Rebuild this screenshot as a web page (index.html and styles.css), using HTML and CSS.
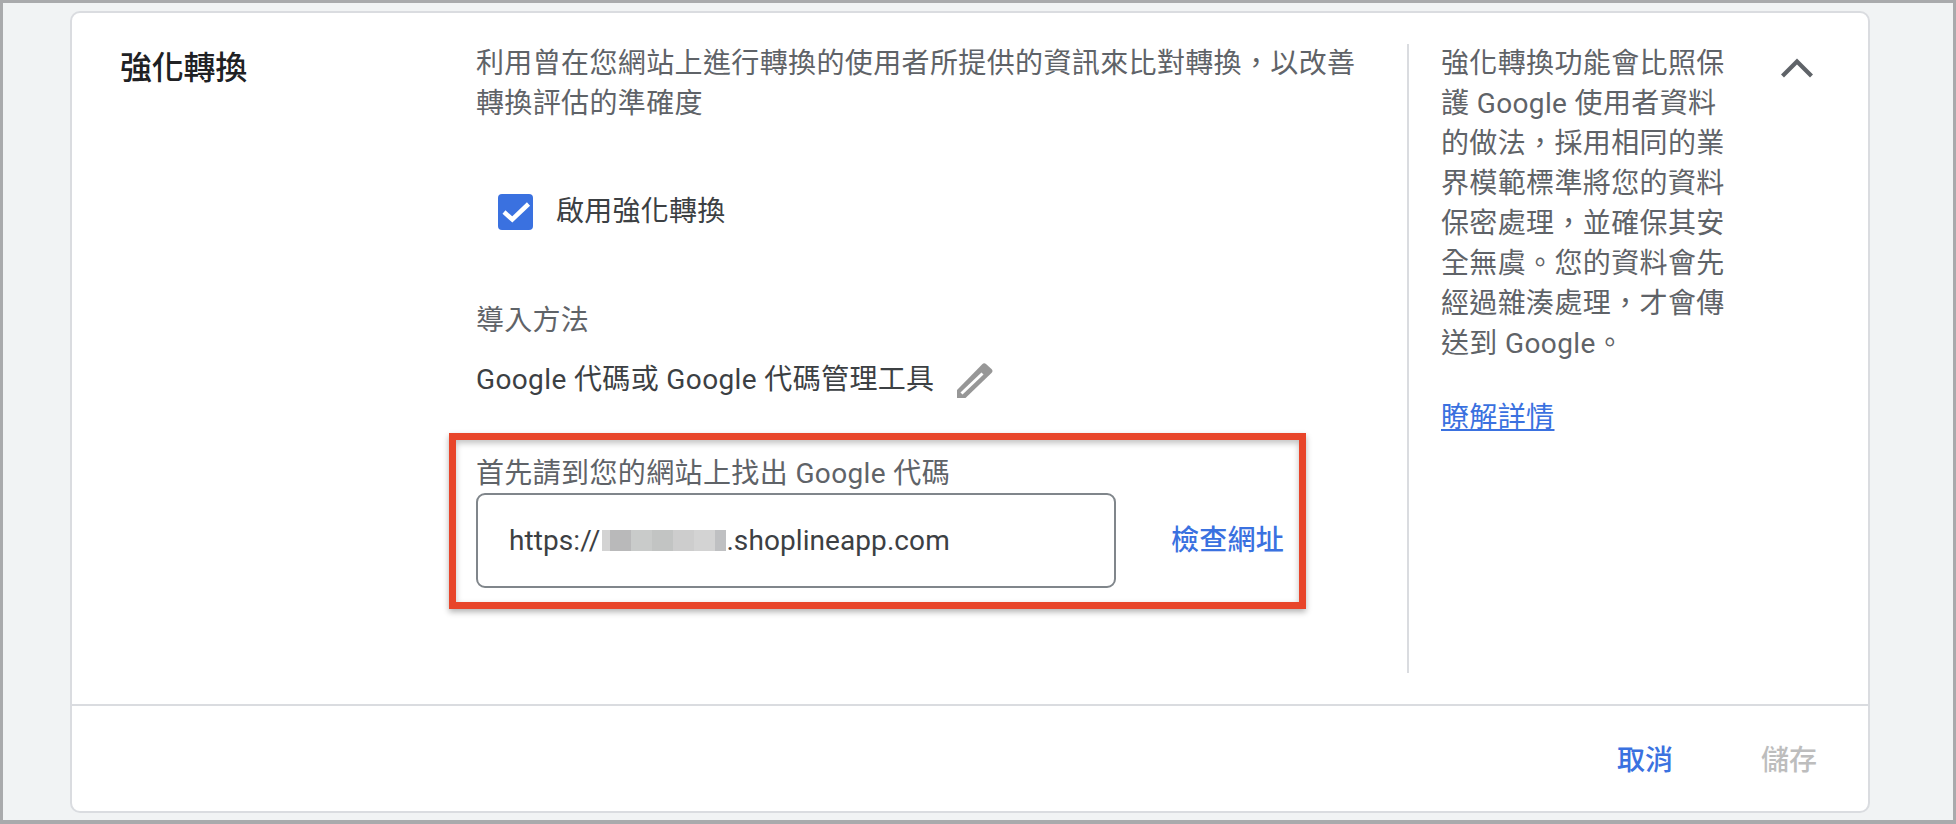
FILE: index.html
```html
<!DOCTYPE html>
<html lang="zh-Hant">
<head>
    <meta charset="UTF-8">
    <meta name="viewport" content="width=device-width, initial-scale=1.0">
    <title>強化轉換</title>
    <link rel="stylesheet" href="styles.css">
</head>
<body>
    <div class="frame">
        <div class="card">
            <div class="card-body">
                <h2 class="title">強化轉換</h2>
                <div class="main">
                    <p class="desc">利用曾在您網站上進行轉換的使用者所提供的資訊來比對轉換&#65292;以改善轉換評估的準確度</p>
                    <div class="check-row">
                        <span class="checkbox">
                            <svg width="35" height="36" viewBox="0 0 35 36"><path d="M6 18l8.300 7.500L30.500 10" fill="none" stroke="#fff" stroke-width="4.500"/></svg>
                        </span>
                        <span class="check-label">啟用強化轉換</span>
                    </div>
                    <p class="field-name">導入方法</p>
                    <div class="method-row">
                        <span>Google 代碼或 Google 代碼管理工具</span>
                        <svg class="pencil" width="36" height="36" viewBox="0 0 36 36">
                            <path d="M0 36V28L25 2.500Q27 0.500 29 2L34.500 7Q36.500 9 34.500 11L8.500 36Z" fill="#979797"/>
                            <path d="M4.500 31.500L25.500 11.500" fill="none" stroke="#fff" stroke-width="3"/>
                        </svg>
                    </div>
                    <div class="highlight">
                        <p class="url-label">首先請到您的網站上找出 Google 代碼</p>
                        <div class="url-row">
                            <div class="url-input">
                                <span>https://</span>
                                <span class="blur">
                                    <i class="b1"></i><i class="b2"></i><i class="b3"></i><i class="b4"></i><i class="b5"></i><i class="b6"></i><i class="b7"></i>
                                </span>
                                <span>.shoplineapp.com</span>
                            </div>
                            <a class="check-link" href="#">檢查網址</a>
                        </div>
                    </div>
                </div>
                <div class="side">
                    <p class="side-text">強化轉換功能會比照保護 Google 使用者資料的做法&#65292;採用相同的業界模範標準將您的資料保密處理&#65292;並確保其安全無虞。您的資料會先經過雜湊處理&#65292;才會傳送到 Google。</p>
                    <a class="learn-more" href="#">瞭解詳情</a>
                </div>
                <svg class="chevron" width="32" height="20" viewBox="0 0 32 20"><path d="M1.500 18L16 3.500 30.500 18" fill="none" stroke="#5f6368" stroke-width="4.200"/></svg>
            </div>
            <div class="card-footer">
                <a class="btn-cancel" href="#">取消</a>
                <span class="btn-save">儲存</span>
            </div>
        </div>
    </div>
</body>
</html>
```

FILE: styles.css
```css
* {
    box-sizing: border-box;
}
html, body {
    height: 824px;
    overflow: hidden;
}
body {
    margin: 0;
    padding: 3px 3px 4px 3px;
    background-color: #a9aaac;
    font-family: Roboto, "Noto Sans CJK TC", sans-serif;
    font-size: 28px;
    line-height: 40px;
    letter-spacing: 0.37px;
    color: #5f6368;
}
p, h2 {
    margin: 0;
}
a {
    color: #3a71e0;
    text-decoration: none;
}
.frame {
    height: 817px;
    padding: 8px 83px 7px 67px;
    background-color: #f1f3f4;
}
.card {
    height: 802px;
    display: flex;
    flex-direction: column;
    background-color: #fff;
    border: 2px solid #dadce0;
    border-radius: 10px;
}
.card-body {
    height: 693px;
    display: flex;
    padding: 31px 0 0 48px;
    border-bottom: 2px solid #dadce0;
}
.title {
    width: 356px;
    margin-top: 4px;
    font-size: 32px;
    font-weight: 500;
    letter-spacing: -0.25px;
    color: #202124;
}
.main {
    width: 931px;
}
.desc {
    width: 890px;
}
.check-row {
    display: flex;
    align-items: center;
    gap: 23px;
    margin: 68px 0 0 22px;
    letter-spacing: 0.25px;
    color: #3c4043;
}
.checkbox {
    width: 35px;
    height: 36px;
    display: block;
    background-color: #3a71e0;
    border-radius: 4px;
}
.checkbox svg {
    display: block;
}
.field-name {
    margin-top: 69px;
    letter-spacing: 0.25px;
}
.method-row {
    display: flex;
    align-items: center;
    gap: 22px;
    margin-top: 19px;
    color: #3c4043;
}
.highlight {
    width: 857px;
    height: 176px;
    margin: 33px 0 0 -27px;
    padding: 14px 0 0 20px;
    border: 7px solid #e8452a;
    box-shadow: 0 3px 6px rgba(0, 0, 0, 0.3), inset 0 3px 6px rgba(0, 0, 0, 0.25);
}
.url-label {
    height: 39px;
}
.url-row {
    display: flex;
    align-items: center;
    gap: 55px;
}
.url-input {
    width: 640px;
    height: 95px;
    display: flex;
    align-items: center;
    padding-left: 31px;
    border: 2px solid #80868b;
    border-radius: 9px;
    letter-spacing: 0.08px;
    color: #3c4043;
}
.blur {
    height: 21px;
    display: flex;
    margin-left: 2px;
}
.blur i {
    display: block;
    width: 21px;
}
.blur .b1 { width: 8px; background-color: #d3d3d3; }
.blur .b2 { background-color: #b9b9ba; }
.blur .b3 { background-color: #c9cbca; }
.blur .b4 { background-color: #c2c4c3; }
.blur .b5 { background-color: #cdcdcd; }
.blur .b6 { background-color: #d3d3d3; }
.blur .b7 { width: 11px; background-color: #bfc0c2; }
.check-link {
    font-weight: 500;
    letter-spacing: 0.25px;
}
.side {
    width: 300px;
    height: 629px;
    padding-left: 32px;
    border-left: 2px solid #dadce0;
}
.side-text {
    width: 286px;
}
.learn-more {
    display: inline-block;
    margin-top: 34px;
    text-decoration: underline;
}
.chevron {
    margin: 14px 0 0 74px;
}
.card-footer {
    flex: 1;
    display: flex;
    justify-content: flex-end;
    gap: 88px;
    padding: 35px 51px 0 0;
    font-weight: 500;
    letter-spacing: 0;
}
.btn-save {
    color: #bdbdbd;
}
```
